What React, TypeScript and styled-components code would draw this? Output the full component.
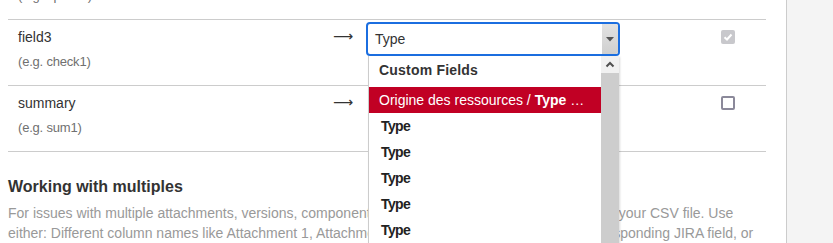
import React from "react";
import styled, { createGlobalStyle } from "styled-components";

const GlobalStyle = createGlobalStyle`
  html, body { margin: 0; padding: 0; overflow: hidden; background: #fff; }
  body { font-family: "Liberation Sans", Arial, sans-serif; color: #333; }
`;

const Page = styled.div`
  display: flex;
  width: 833px;
  height: 243px;
  overflow: hidden;
`;

const Main = styled.div`
  width: 758px;
  padding: 0 20px 0 8px;
  border-right: 1px solid #ccc;
  height: 243px;
`;

const Content = styled.div`
  margin-top: -46px;
`;

const Side = styled.div`
  flex: 1;
  background: #f4f4f4;
`;

const Row = styled.div`
  display: grid;
  grid-template-columns: 315px 33px 355px 1fr;
  align-items: start;
  box-sizing: border-box;
  height: 66px;
  padding: 2px 0 0 10px;
  border-bottom: 1px solid #ccc;
`;

const NameCell = styled.div`
  margin-top: 5px;
`;

const FieldName = styled.div`
  font-size: 14px;
  line-height: 20px;
  color: #333;
`;

const Hint = styled.div`
  margin-top: 7px;
  font-size: 13px;
  letter-spacing: -0.2px;
  line-height: 16px;
  color: #707070;
`;

const Arrow = styled.div`
  margin-top: 4px;
  font-family: "DejaVu Sans", sans-serif;
  font-size: 14px;
  line-height: 20px;
  color: #333;
`;

const SelectWrap = styled.div`
  position: relative;
  width: 254px;
`;

const SelectBox = styled.div`
  display: flex;
  align-items: stretch;
  box-sizing: border-box;
  height: 34px;
  border: 2px solid #1b6ee0;
  border-radius: 4px;
  overflow: hidden;
  background: #fff;
`;

const SelectValue = styled.div`
  flex: 1;
  display: flex;
  align-items: center;
  padding-left: 7px;
  font-size: 14px;
  color: #333;
`;

const SelectButton = styled.div`
  width: 16px;
  display: flex;
  align-items: center;
  justify-content: center;
  background: linear-gradient(#e2e2e2, #cfcfcf);
`;

const Dropdown = styled.div`
  position: absolute;
  top: 34px;
  left: 2px;
  z-index: 10;
  display: flex;
  width: 250px;
  height: 200px;
  background: #fff;
  border-left: 1px solid #ccc;
  box-shadow: 1px 1px 2px rgba(0, 0, 0, 0.15);
`;

const Options = styled.div`
  flex: 1;
  overflow: hidden;
`;

const GroupLabel = styled.div`
  height: 31px;
  box-sizing: border-box;
  padding: 0 0 4px 10px;
  display: flex;
  align-items: center;
  font-size: 14px;
  font-weight: bold;
  letter-spacing: 0.2px;
  color: #333;
`;

const Option = styled.div<{ $active?: boolean }>`
  height: 26px;
  display: flex;
  align-items: center;
  padding-left: ${(p) => (p.$active ? "10px" : "12px")};
  font-size: 14px;
  white-space: nowrap;
  color: ${(p) => (p.$active ? "#fff" : "#222")};
  background: ${(p) => (p.$active ? "#c10024" : "transparent")};
  font-weight: ${(p) => (p.$active ? "normal" : "bold")};
  letter-spacing: ${(p) => (p.$active ? "0" : "-0.6px")};
`;

const Strong = styled.b`
  font-weight: bold;
`;

const Scrollbar = styled.div`
  width: 18px;
  display: flex;
  flex-direction: column;
  background: #cdcdcd;
`;

const ScrollUp = styled.div`
  height: 17px;
  background: #f1f1f1;
  display: flex;
  align-items: center;
  justify-content: center;
`;

const CheckBox = styled.span<{ $checked?: boolean }>`
  margin-top: 8px;
  width: 14px;
  height: 14px;
  box-sizing: border-box;
  border-radius: 2px;
  display: flex;
  align-items: center;
  justify-content: center;
  background: ${(p) => (p.$checked ? "#c8c8cc" : "#fff")};
  border: ${(p) => (p.$checked ? "none" : "2px solid #8b899a")};
`;

const Section = styled.div`
  padding-top: 25px;
`;

const Heading = styled.h3`
  margin: 0 0 6px;
  font-size: 16px;
  line-height: 20px;
  font-weight: bold;
  color: #333;
`;

const Para = styled.p`
  margin: 0;
  font-size: 14px;
  line-height: 20px;
  color: #999;
`;

const CheckMark = () => (
  <svg width="10" height="10" viewBox="0 0 10 10">
    <path d="M1.5 5.2 L4 7.5 L8.5 2.5" fill="none" stroke="#fff" strokeWidth="2" />
  </svg>
);

const Caret = () => (
  <svg width="8" height="5" viewBox="0 0 8 5">
    <path d="M0 0 H8 L4 4.5 Z" fill="#555" />
  </svg>
);

const Chevron = () => (
  <svg width="10" height="7" viewBox="0 0 10 7">
    <path d="M1.5 5.5 L5 2 L8.5 5.5" fill="none" stroke="#505050" strokeWidth="2" />
  </svg>
);

type FieldRowProps = {
  name: string;
  hint: string;
  checked?: boolean;
  children?: React.ReactNode;
};

const FieldRow = ({ name, hint, checked, children }: FieldRowProps) => (
  <Row>
    <NameCell>
      <FieldName>{name}</FieldName>
      <Hint>{hint}</Hint>
    </NameCell>
    <Arrow>⟶</Arrow>
    <div>{children}</div>
    <CheckBox $checked={checked}>{checked && <CheckMark />}</CheckBox>
  </Row>
);

export default function App() {
  return (
    <>
      <GlobalStyle />
      <Page>
        <Main>
          <Content>
            <FieldRow name="field2" hint="(e.g. option1)" />
            <FieldRow name="field3" hint="(e.g. check1)" checked>
              <SelectWrap>
                <SelectBox>
                  <SelectValue>Type</SelectValue>
                  <SelectButton>
                    <Caret />
                  </SelectButton>
                </SelectBox>
                <Dropdown>
                  <Options>
                    <GroupLabel>Custom Fields</GroupLabel>
                    <Option $active>
                      Origine des ressources /&nbsp;<Strong>Type</Strong>&nbsp;…
                    </Option>
                    <Option>Type</Option>
                    <Option>Type</Option>
                    <Option>Type</Option>
                    <Option>Type</Option>
                    <Option>Type</Option>
                    <Option>Type</Option>
                  </Options>
                  <Scrollbar>
                    <ScrollUp>
                      <Chevron />
                    </ScrollUp>
                  </Scrollbar>
                </Dropdown>
              </SelectWrap>
            </FieldRow>
            <FieldRow name="summary" hint="(e.g. sum1)" />
            <Section>
              <Heading>Working with multiples</Heading>
              <Para>
                For issues with multiple attachments, versions, components and labels, create multiple columns in your
                CSV file. Use either: Different column names like Attachment 1, Attachment 2 that are each mapped to
                the corresponding JIRA field, or the same column name repeated several times.
              </Para>
            </Section>
          </Content>
        </Main>
        <Side />
      </Page>
    </>
  );
}
